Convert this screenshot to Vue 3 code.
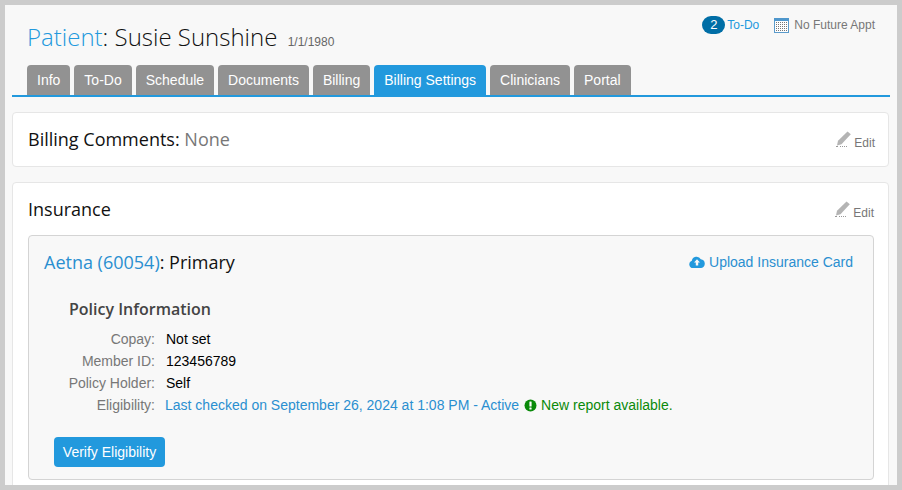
<script setup>
const tabs = ['Info', 'To-Do', 'Schedule', 'Documents', 'Billing', 'Billing Settings', 'Clinicians', 'Portal']
const activeTab = 'Billing Settings'

const policyRows = [
  { label: 'Copay:', value: 'Not set' },
  { label: 'Member ID:', value: '123456789' },
  { label: 'Policy Holder:', value: 'Self' },
]
</script>

<template>
  <div class="frame">
    <div class="page">
      <header class="top">
        <h1 class="patient">
          <span class="patient-label">Patient</span>: Susie Sunshine
          <small class="dob">1/1/1980</small>
        </h1>
        <div class="top-links">
          <span class="badge">2</span>
          <a class="todo-link">To-Do</a>
          <svg class="cal" width="15" height="15" viewBox="0 0 15 15">
            <rect x="0.5" y="0.5" width="14" height="14" fill="#fff" stroke="#5b9bcb" />
            <rect x="0" y="0" width="15" height="3" fill="#4f97cc" />
            <g fill="#777">
              <template v-for="row in 5" :key="row">
                <rect v-for="col in 6" :key="col" :x="col * 2" :y="2 + row * 2" width="1" height="1" />
              </template>
            </g>
          </svg>
          <span class="appt">No Future Appt</span>
        </div>
      </header>

      <nav class="tabs">
        <a v-for="tab in tabs" :key="tab" class="tab" :class="{ 'tab--active': tab === activeTab }">{{ tab }}</a>
      </nav>

      <section class="card card--comments">
        <h2 class="card-title">Billing Comments: <span class="none">None</span></h2>
        <a class="edit">
          <svg width="15" height="16" viewBox="0 0 15 16">
            <path d="M11.500 0.500 14.800 3.300 5.500 13.200 1 14.500 2 9.800Z" fill="#b4b4b4" />
            <path d="M0 15.500h2M4 15.500h1M6 15.500h1M8 15.500h1M10 15.500h1" stroke="#999" stroke-width="1" />
          </svg>
          <span class="edit-text">Edit</span>
        </a>
      </section>

      <section class="card card--insurance">
        <div class="insurance-head">
          <h2 class="card-title">Insurance</h2>
          <a class="edit">
            <svg width="15" height="16" viewBox="0 0 15 16">
              <path d="M11.500 0.500 14.800 3.300 5.500 13.200 1 14.500 2 9.800Z" fill="#b4b4b4" />
              <path d="M0 15.500h2M4 15.500h1M6 15.500h1M8 15.500h1M10 15.500h1" stroke="#999" stroke-width="1" />
            </svg>
            <span class="edit-text">Edit</span>
          </a>
        </div>

        <div class="policy">
          <div class="policy-head">
            <h3 class="carrier"><a class="carrier-link">Aetna (60054)</a>: Primary</h3>
            <a class="upload">
              <svg width="16" height="12" viewBox="0 0 16 12">
                <path d="M4 12A3.700 3.700 0 0 1 2.800 4.800 4.800 4.800 0 0 1 11.800 3.300 4.400 4.400 0 0 1 12.200 12Z" fill="#2299dd" />
                <path d="M8 3.200 11 6.500H9.200V9.600H6.800V6.500H5Z" fill="#f8f8f8" />
              </svg>
              Upload Insurance Card
            </a>
          </div>

          <h4 class="policy-title">Policy Information</h4>
          <dl class="rows">
            <template v-for="row in policyRows" :key="row.label">
              <dt>{{ row.label }}</dt>
              <dd>{{ row.value }}</dd>
            </template>
            <dt>Eligibility:</dt>
            <dd class="eligibility">
              <a class="checked">Last checked on September 26, 2024 at 1:08 PM - Active</a>
              <svg class="alert" width="13" height="13" viewBox="0 0 13 13">
                <circle cx="6.500" cy="6.500" r="6" fill="#0a8a0a" />
                <rect x="5.400" y="2.600" width="2.200" height="4.900" rx="0.500" fill="#fff" />
                <rect x="5.400" y="8.400" width="2.200" height="2.100" rx="0.500" fill="#fff" />
              </svg>
              <span class="report">New report available.</span>
            </dd>
          </dl>

          <button class="verify" type="button">Verify Eligibility</button>
        </div>
      </section>
    </div>
  </div>
</template>

<style>
html, body {
  margin: 0;
  background: #ccc;
}
</style>

<style scoped>
.frame {
  width: 902px;
  height: 490px;
  box-sizing: border-box;
  border: 5px solid #ccc;
  overflow: hidden;
  background: #f8f8f8;
  font-family: "Liberation Sans", Arial, sans-serif;
  font-size: 14px;
  color: #000;
}
.page {
  padding: 0 7px 0 7px;
}
.top {
  display: flex;
  justify-content: space-between;
  align-items: flex-start;
  height: 60px;
  padding: 0 15px;
}
.patient {
  margin: 15px 0 0;
  font-family: "Open Sans", sans-serif;
  font-weight: 300;
  font-size: 24px;
  line-height: 33px;
  color: #111;
  white-space: nowrap;
}
.patient-label {
  color: #2299dd;
}
.dob {
  font-family: "Liberation Sans", Arial, sans-serif;
  font-size: 12px;
  color: #666;
  margin-left: 4px;
  font-weight: 400;
}
.top-links {
  display: flex;
  align-items: center;
  margin-top: 11px;
  font-size: 12px;
}
.badge {
  width: 23px;
  height: 18px;
  border-radius: 9px;
  background: #006ea6;
  color: #fff;
  font-size: 13px;
  line-height: 18px;
  text-align: center;
}
.todo-link {
  color: #2299dd;
  margin-left: 2px;
}
.cal {
  margin-left: 15px;
}
.appt {
  color: #777;
  margin-left: 5px;
}
.tabs {
  display: flex;
  gap: 4px;
  padding-left: 15px;
  border-bottom: 2px solid #2299dd;
}
.tab {
  height: 30px;
  padding: 0 10px;
  background: #929292;
  color: #fff;
  line-height: 30px;
  border-radius: 4px 4px 0 0;
}
.tab--active {
  background: #2299dd;
}
.card {
  background: #fff;
  border: 1px solid #e6e6e6;
  border-radius: 4px;
  width: 877px;
  box-sizing: border-box;
}
.card--comments {
  margin-top: 15px;
  height: 55px;
  display: flex;
  justify-content: space-between;
  align-items: center;
  padding: 0 13px 1px 15px;
}
.card--insurance {
  margin-top: 15px;
  height: 320px;
  padding: 0 14px 0 15px;
}
.insurance-head {
  display: flex;
  justify-content: space-between;
  align-items: center;
  height: 52px;
}
.card-title {
  margin: 0;
  font-family: "Open Sans", sans-serif;
  font-size: 18px;
  font-weight: 400;
  color: #111;
}
.none {
  color: #777;
}
.edit {
  display: flex;
  align-items: flex-end;
  gap: 3px;
  font-size: 12px;
  color: #777;
}
.edit-text {
  margin-bottom: -3px;
}
.policy {
  background: #f8f8f8;
  border: 1px solid #d4d4d4;
  border-radius: 4px;
  height: 245px;
  box-sizing: border-box;
  padding: 0 20px 0 15px;
}
.policy-head {
  display: flex;
  justify-content: space-between;
  align-items: center;
  height: 52px;
}
.carrier {
  margin: 0;
  font-family: "Open Sans", sans-serif;
  font-size: 18px;
  font-weight: 400;
  color: #111;
}
.carrier-link {
  color: #2a8fd0;
}
.upload {
  display: flex;
  align-items: center;
  gap: 4px;
  color: #2a8fd0;
}
.policy-title {
  margin: 10px 0 0 25px;
  font-family: "Open Sans", sans-serif;
  font-size: 16px;
  font-weight: 600;
  color: #444;
  line-height: 22px;
}
.rows {
  display: grid;
  grid-template-columns: 111px 1fr;
  column-gap: 11px;
  margin: 8px 0 0;
  line-height: 22px;
}
.rows dt {
  text-align: right;
  color: #777;
}
.rows dd {
  margin: 0;
}
.eligibility {
  display: flex;
  align-items: center;
}
.checked {
  color: #2a8fd0;
  margin-left: -1px;
}
.alert {
  margin: 0 4px 0 5px;
}
.report {
  color: #0a8a0a;
}
.verify {
  display: block;
  margin: 21px 0 0 10px;
  width: 111px;
  height: 30px;
  background: #2299dd;
  color: #fff;
  border: 0;
  border-radius: 4px;
  font-family: inherit;
  font-size: 14px;
  padding: 0;
}
</style>
